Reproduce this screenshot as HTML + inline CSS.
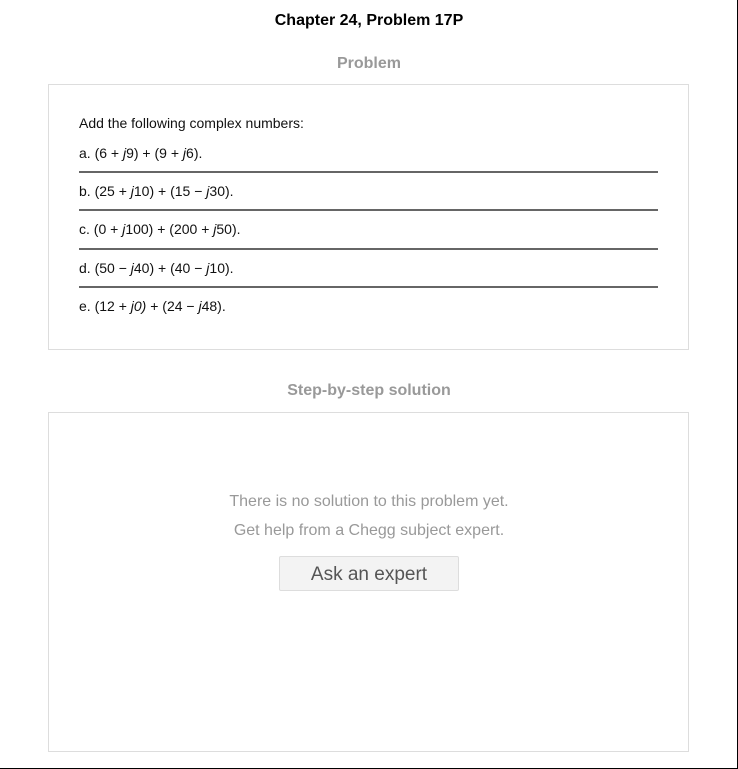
<!DOCTYPE html>
<html><head><style>
html,body{margin:0;padding:0;background:#fff}
body{width:738px;height:769px;position:relative;overflow:hidden;font-family:"Liberation Sans",Arial,sans-serif}
.frame{position:absolute;left:0;top:0;width:737px;height:768px;border-right:1px solid #000;border-bottom:1px solid #000;box-sizing:content-box}
.t{position:absolute;left:0;width:738px;text-align:center;font-weight:bold}
.box{position:absolute;left:48px;width:639px;border:1px solid #ddd}
.p{position:absolute;left:79px;font-size:14px;color:#111}
.ln{position:absolute;left:79px;width:579px;height:2px;background:#666}
.g{position:absolute;left:0;width:738px;text-align:center;color:#999;font-size:16px}
.btn{position:absolute;left:279px;top:556px;width:178px;height:33px;background:#f3f3f3;border:1px solid #ddd;border-radius:2px;text-align:center;line-height:36px;font-size:19px;color:#555}
i{font-style:italic}
</style></head><body>
<div class="frame"></div>
<div class="t" style="top:12px;font-size:16px;color:#000">Chapter 24, Problem 17P</div>
<div class="t" style="top:55px;font-size:16px;color:#999">Problem</div>
<div class="box" style="top:84px;height:264px"></div>
<div class="p" style="top:115px">Add the following complex numbers:</div>
<div class="p" style="top:145px">a. (6 + <i>j</i>9) + (9 + <i>j</i>6).</div>
<div class="ln" style="top:171px"></div>
<div class="p" style="top:183px">b. (25 + <i>j</i>10) + (15 − <i>j</i>30).</div>
<div class="ln" style="top:209px"></div>
<div class="p" style="top:221px">c. (0 + <i>j</i>100) + (200 + <i>j</i>50).</div>
<div class="ln" style="top:248px"></div>
<div class="p" style="top:260px">d. (50 − <i>j</i>40) + (40 − <i>j</i>10).</div>
<div class="ln" style="top:286px"></div>
<div class="p" style="top:298px">e. (12 + <i>j0)</i> + (24 − <i>j</i>48).</div>
<div class="t" style="top:382px;font-size:16px;color:#999">Step-by-step solution</div>
<div class="box" style="top:412px;height:338px"></div>
<div class="g" style="top:493px">There is no solution to this problem yet.</div>
<div class="g" style="top:522px">Get help from a Chegg subject expert.</div>
<div class="btn">Ask an expert</div>
</body></html>
